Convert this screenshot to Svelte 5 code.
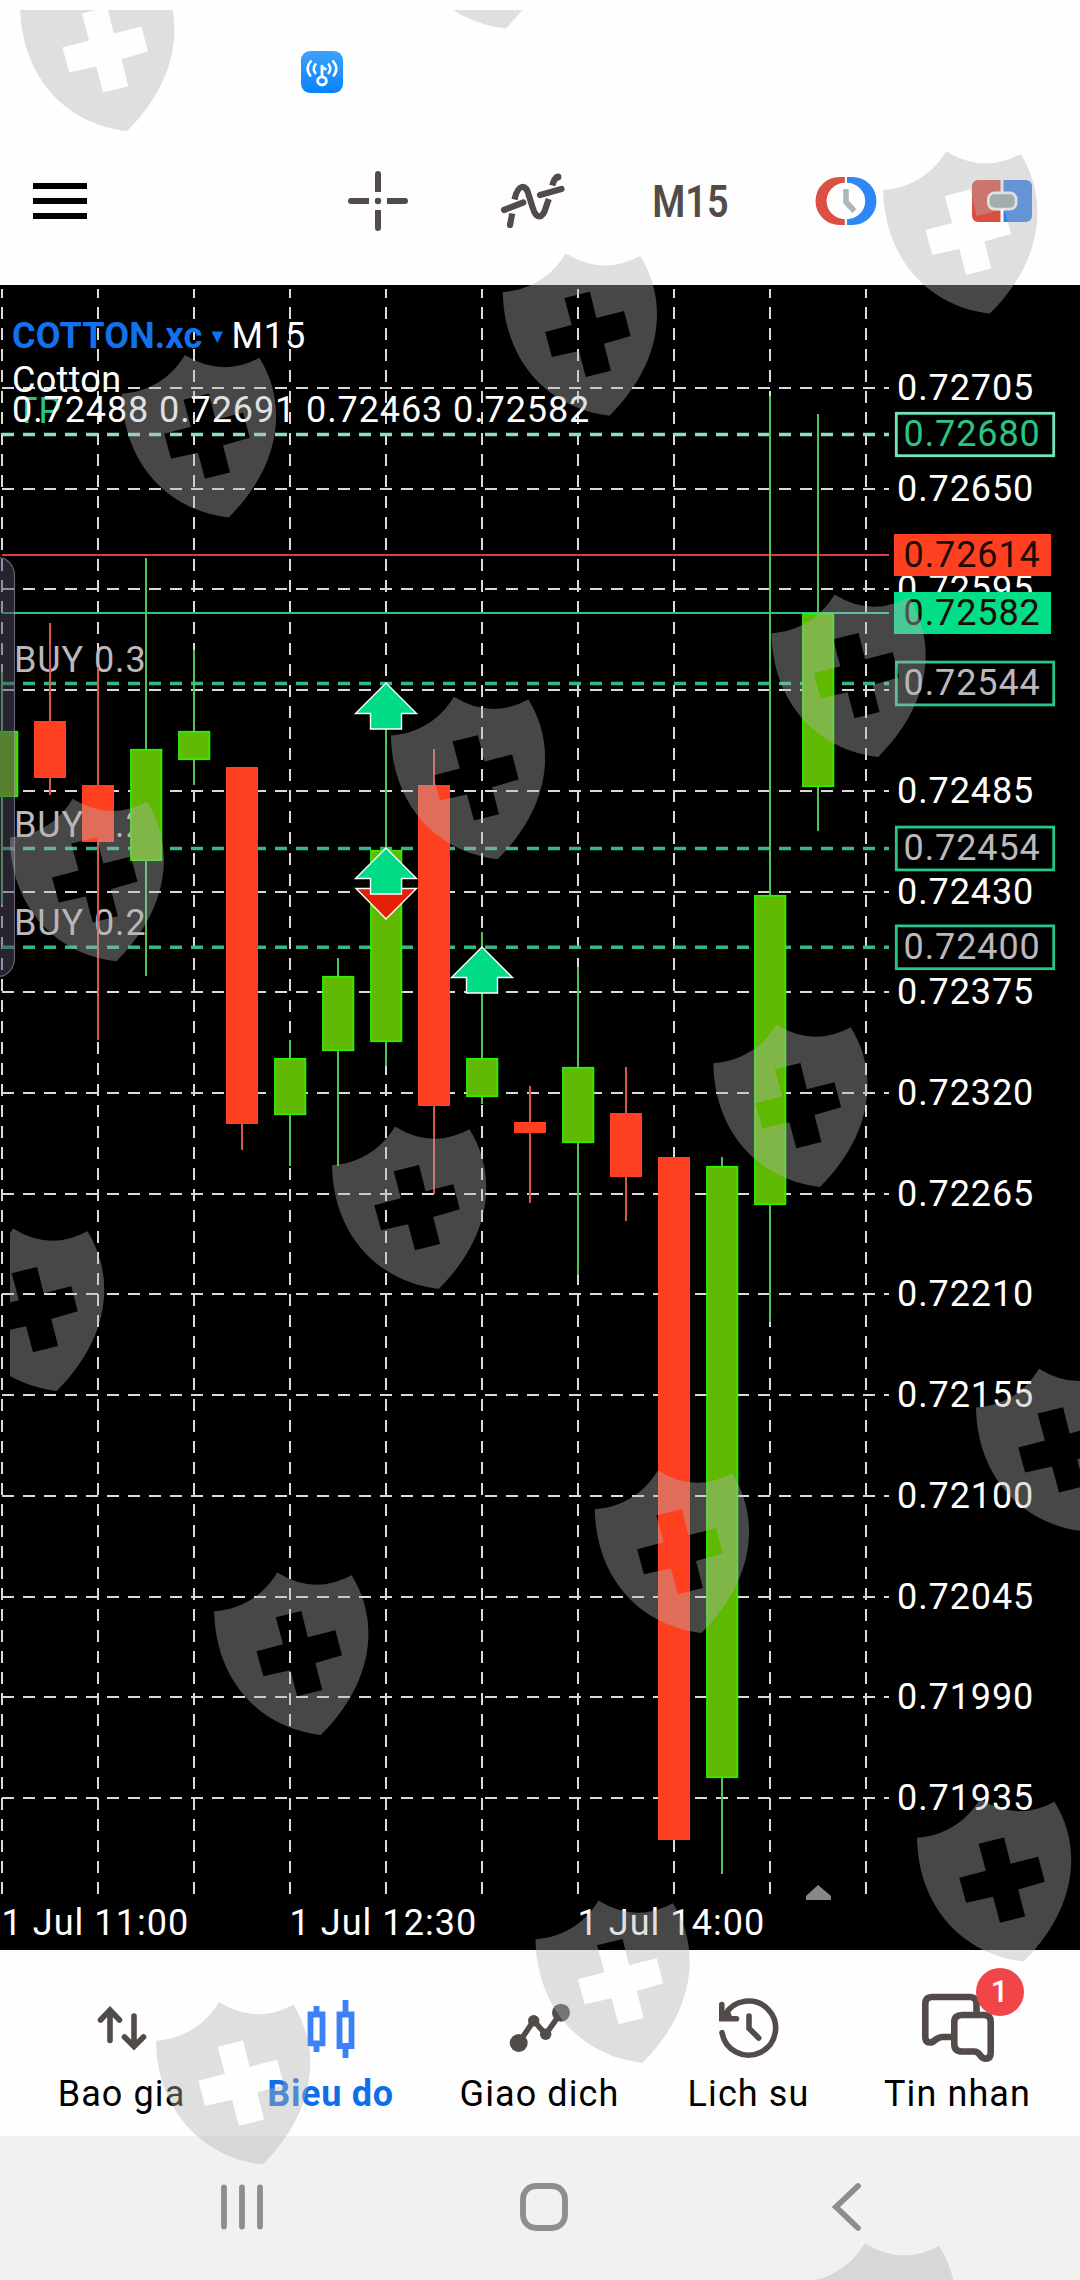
<script lang="ts">
  type Candle = { up: boolean; high: number; top: number; bottom: number; low: number };

  const TOP = 285;
  const STEP = 48;

  // pixel y of a price, given in points (0.72705 -> 72705)
  const priceY = (points: number) => 388.05 + (72705 - points) * 1.8312;
  const format = (points: number) => "0." + points;
  const candleX = (i: number) => 2 + i * STEP;

  const gridPrices = Array.from({ length: 15 }, (_, i) => 72705 - i * 55);
  const gridColumns = Array.from({ length: 10 }, (_, i) => 2 + i * 96);

  const candles: Candle[] = [
    { up: true, high: 672, top: 731, bottom: 797, low: 905 },
    { up: false, high: 623, top: 721, bottom: 778, low: 795 },
    { up: false, high: 667, top: 785, bottom: 842, low: 1040 },
    { up: true, high: 558, top: 749, bottom: 861, low: 976 },
    { up: true, high: 650, top: 731, bottom: 760, low: 785 },
    { up: false, high: 767, top: 767, bottom: 1124, low: 1150 },
    { up: true, high: 1040, top: 1058, bottom: 1115, low: 1166 },
    { up: true, high: 958, top: 976, bottom: 1051, low: 1166 },
    { up: true, high: 686, top: 850, bottom: 1042, low: 1066 },
    { up: false, high: 749, top: 785, bottom: 1106, low: 1194 },
    { up: true, high: 932, top: 1058, bottom: 1097, low: 1104 },
    { up: false, high: 1086, top: 1122, bottom: 1133, low: 1203 },
    { up: true, high: 967, top: 1067, bottom: 1143, low: 1275 },
    { up: false, high: 1067, top: 1113, bottom: 1177, low: 1221 },
    { up: false, high: 1157, top: 1157, bottom: 1840, low: 1840 },
    { up: true, high: 1157, top: 1166, bottom: 1778, low: 1874 },
    { up: true, high: 396, top: 895, bottom: 1205, low: 1322 },
    { up: true, high: 414, top: 613, bottom: 787, low: 831 },
  ];

  const orders = [
    { label: "BUY 0.3", price: 72544, y: 683.5 },
    { label: "BUY 0.2", price: 72454, y: 848.5 },
    { label: "BUY 0.2", price: 72400, y: 947.3 },
  ];

  const times = [
    { x: 1.5, label: "1 Jul 11:00" },
    { x: 289.5, label: "1 Jul 12:30" },
    { x: 577.5, label: "1 Jul 14:00" },
  ];

  const buys = [
    { x: 386, y: 683 },
    { x: 386, y: 848 },
    { x: 482, y: 947 },
  ];

  const shields = [
    [83.2, -31.2], [462, -134], [946.2, 151.2], [565.8, 253.3], [184.9, 355],
    [834.5, 594.5], [453.9, 696.8], [72.7, 798.8], [776.3, 1024.5], [395, 1126.5],
    [13, 1228.5], [1039, 1368.8], [657.8, 1470.5], [277.2, 1572.5], [980, 1799],
    [598.5, 1900.5], [219, 2002], [864.8, 2243.3],
  ];

  const tabs = [
    { id: "quotes", label: "Bao gia" },
    { id: "chart", label: "Bieu do" },
    { id: "trade", label: "Giao dich" },
    { id: "history", label: "Lich su" },
    { id: "messages", label: "Tin nhan", badge: 1 },
  ];

  let activeTab = $state("chart");
</script>

<div class="screen">
  <div class="status-bar">
    <svg width="42" height="42" viewBox="0 0 42 42">
      <defs>
        <linearGradient id="wifi-key" x1="0" y1="0" x2="0" y2="1">
          <stop offset="0" stop-color="#3ea2f8" />
          <stop offset="1" stop-color="#0683ff" />
        </linearGradient>
      </defs>
      <rect width="42" height="42" rx="9" fill="url(#wifi-key)" />
      <g fill="none" stroke="#fff" stroke-width="2.4">
        <path d="M10.500 9.500Q3 17.500 10 25.500M15 12.500Q10.500 17.500 15 23M31.500 9.500Q39 17.500 32 25.500M27 12.500Q31.500 17.500 27 23" />
        <ellipse cx="21" cy="29.800" rx="4.400" ry="4" stroke-width="2.800" />
        <path d="M21 25.500V14" stroke-width="2.800" />
        <path d="M21 16.500L25.500 18.500" stroke-width="2.800" />
      </g>
    </svg>
  </div>

  <header class="toolbar">
    <button class="menu" aria-label="Menu">
      <span></span>
      <span></span>
      <span></span>
    </button>
    <div class="tools">
      <button aria-label="Crosshair">
        <svg width="80" height="80" viewBox="-40 -40 80 80">
          <g fill="#524b49">
            <circle r="3.200" />
            <path d="M-9 -3H-27a3 3 0 0 0 0 6H-9zM9 -3H27a3 3 0 0 1 0 6H9zM-3 -9V-27a3 3 0 0 1 6 0V-9zM-3 9V27a3 3 0 0 0 6 0V9z" />
          </g>
        </svg>
      </button>
      <button aria-label="Indicators">
        <svg width="80" height="80" viewBox="-40 -40 80 80">
          <g fill="none" stroke="#524b49" stroke-width="6.200">
            <path d="M-24 24L-21.800 12.500M-19.500 -1.500C-16 -17 -8 -18 -5 -5L-1.500 6C2 19 9 18 12 6L14.800 -2M18.300 -15.500C19.500 -20 21 -23 23.500 -24" />
            <path d="M-30 9L-10.700 1.500M6 -6L27.500 -12" stroke-linecap="round" />
          </g>
          <circle cx="-24" cy="24" r="3.100" fill="#524b49" />
          <circle cx="24" cy="-24" r="3.400" fill="#524b49" />
        </svg>
      </button>
      <button class="period"><span>M15</span></button>
      <button aria-label="Trading session">
        <svg width="80" height="80" viewBox="-40 -40 80 80">
          <path d="M-1.200 -24H-6.500A24 24 0 0 0 -6.500 24H-1.200V18.200A18.200 18.200 0 0 1 -1.200 -18.200Z" fill="#db5043" />
          <path d="M1 -24H6.500A24 24 0 0 1 6.500 24H1V18.200A18.200 18.200 0 0 0 1 -18.200Z" fill="#2f86f6" />
          <path d="M0 -12V1L8.500 10" fill="none" stroke="#abb7bd" stroke-width="5.500" stroke-linejoin="round" />
        </svg>
      </button>
      <button aria-label="One click trading">
        <svg width="80" height="80" viewBox="-40 -40 80 80">
          <path d="M-1.500 -21H-24a6 6 0 0 0 -6 6V15a6 6 0 0 0 6 6H-1.500z" fill="#db4f41" />
          <path d="M1.500 -21H24a6 6 0 0 1 6 6V15a6 6 0 0 1 -6 6H1.500z" fill="#3380ee" />
          <rect x="-15" y="-9.500" width="30.500" height="19" rx="7.500" fill="#fff" />
          <rect x="-12.300" y="-6.700" width="25" height="13.400" rx="5" fill="#99a8ae" />
        </svg>
      </button>
    </div>
  </header>

  <main class="chart">
    <svg width="1080" height="1665" viewBox="0 {TOP} 1080 1665">
      <g class="grid">
        {#each gridColumns as x}
          <line x1={x} x2={x} y1="1894" y2="289" />
        {/each}
        {#each gridPrices as price}
          <line x1="2" x2="889" y1={Math.round(priceY(price))} y2={Math.round(priceY(price))} />
        {/each}
      </g>

      <line class="ask" x1="2" x2="889" y1="555" y2="555" />
      <line class="bid" x1="2" x2="889" y1="613" y2="613" />
      <line class="level tp" x1="2" x2="889" y1="434.500" y2="434.500" />
      {#each orders as order}
        <line class="level" x1="2" x2="889" y1={order.y} y2={order.y} />
        <text class="order-label" x="14" y={order.y - 12}>{order.label}</text>
      {/each}

      {#each candles as c, i}
        <g class={c.up ? "up" : "down"}>
          <line x1={candleX(i)} x2={candleX(i)} y1={c.high} y2={c.low} />
          {#if c.up}
            <rect x={candleX(i) - 15} y={c.top + 0.8} width="30.4" height={c.bottom - c.top - 1.6} />
          {:else}
            <rect x={candleX(i) - 16} y={c.top} width="32" height={c.bottom - c.top} />
          {/if}
        </g>
      {/each}

      <path class="sell" d="M386 919L356 888.500H371V873H401V888.500H416.500Z" />
      {#each buys as b}
        <path class="buy" d="M{b.x} {b.y}l30.500 30.500h-15v15.500h-31v-15.500h-15z" />
      {/each}

      <text class="symbol" x="12" y="348">COTTON.xc</text>
      <path d="M211.500 331.500H223L217.300 343Z" fill="#0f72f0" />
      <text x="231.500" y="348" letter-spacing="0">M15</text>
      <text class="desc" x="12" y="392">Cotton</text>
      <text class="tp-label" x="16" y="422.500">TP</text>
      <text x="12" y="422">0.72488 0.72691 0.72463 0.72582</text>

      {#each gridPrices.filter((p) => p !== 72540) as price}
        <text x="897" y={priceY(price) + 12}>{format(price)}</text>
      {/each}

      <rect class="box tp-box" x="896.300" y="413.300" width="157.400" height="42.400" />
      <text class="tp-price" x="903.500" y="446">0.72680</text>
      <rect x="894" y="534" width="157" height="42" fill="#ff4020" />
      <text class="quote" x="903.500" y="567">0.72614</text>
      <rect x="894" y="592" width="157" height="42" fill="#00de87" />
      <text class="quote" x="903.500" y="625">0.72582</text>
      {#each orders as order}
        <rect class="box" x="896.300" y={order.y - 21.4} width="157.400" height="42.800" />
        <text class="order-price" x="903.500" y={order.y + 11.3}>{format(order.price)}</text>
      {/each}

      {#each times as t}
        <text class="time" x={t.x} y="1935">{t.label}</text>
      {/each}
      <path d="M818 1885L831 1896V1900H806V1896Z" fill="#888" />

      <!-- edge panel handle -->
      <path class="handle" d="M-2 557.500A16.500 18 0 0 1 14.500 576V958A16.500 18 0 0 1 -2 976.500Z" />
    </svg>
  </main>

  <nav class="tabs">
    {#each tabs as tab}
      <button class="tab" class:active={activeTab === tab.id} onclick={() => (activeTab = tab.id)}>
        <svg width="94" height="94" viewBox="-47 -47 94 94">
          {#if tab.id === "quotes"}
            <path class="line" d="M-12 14.500V-16M-21.500 -6L-12 -16L-2.500 -6M12 -10V20M2.500 11L12 20.500L21.500 11" />
          {:else if tab.id === "chart"}
            <g fill="none" stroke="#3b82f8" stroke-width="5.800">
              <path d="M-20.500 -11.500H-8.500V17.300H-20.500ZM-14.500 -20V-11M-14.500 17V26" />
              <path d="M8.500 -11.500H20.500V20H8.500ZM14.500 -26V-11M14.500 20V32" />
            </g>
          {:else if tab.id === "trade"}
            <path class="line" d="M-21.300 17L-6.300 -5.300L5.700 8.300L21 -13.300" />
            <g fill="#524b49">
              <circle cx="-21.300" cy="17" r="9" />
              <circle cx="-6.300" cy="-5.300" r="5.700" />
              <circle cx="5.700" cy="8.300" r="5.700" />
              <circle cx="21" cy="-13.300" r="9" />
            </g>
          {:else if tab.id === "history"}
            <path class="line" d="M-27 6.700A27 27 0 1 0 -24 -11M0 -10V2.300L9.700 12" />
            <path d="M-30 -21.500a2.800 2.800 0 0 1 5.600 0V-14L-20 -16.500L-17 -10H-12.500a2.800 2.800 0 0 1 0 5.600H-30Z" fill="#524b49" />
          {:else}
            <g class="line bubble">
              <path d="M18.500 -11V-22Q18.500 -29 12 -29H-26Q-32.700 -29 -32.700 -22V12Q-32 17 -27 16.500C-22 15 -22 11 -15 11H-7" />
              <path d="M4 -11H26Q32.700 -11 32.700 -4V27Q32.700 32.700 27.300 32.700C21 32 23 25.500 16 25.500H4Q-3.700 25.500 -3.700 18V-4Q-3.700 -11 4 -11Z" />
            </g>
          {/if}
        </svg>
        <span class="tab-label">{tab.label}</span>
        {#if tab.badge}
          <span class="badge">{tab.badge}</span>
        {/if}
      </button>
    {/each}
  </nav>

  <footer class="system-nav">
    <svg width="50" height="60" viewBox="-25 -30 50 60">
      <path d="M-18 -19.500V19.500M0 -19.500V19.500M18 -19.500V19.500" />
    </svg>
    <svg width="60" height="60" viewBox="-30 -30 60 60">
      <rect x="-21" y="-21" width="42" height="42" rx="13" />
    </svg>
    <svg width="50" height="60" viewBox="-25 -30 50 60">
      <path d="M12 -21L-10 0L12 21" />
    </svg>
  </footer>

  <svg class="shields" width="1080" height="2280" viewBox="0 0 1080 2280">
    <defs>
      <clipPath id="area"><rect x="10" y="10" width="1070" height="2270" /></clipPath>
      <path
        id="shield"
        fill-rule="evenodd"
        d="M0 0Q37 23 74.400 2.700C104 50 95 112 43.700 162.400C-20 155 -62 105 -63 38.700C-38 37 -15 25 0 0ZM-1.400 44.700L5.900 71.700L-20.700 78.700L-13.900 103.700L13.100 97.700L20 123.700L45.100 117.400L38.200 90.400L64.800 82.700L58.200 57.700L30.600 64.700L24.100 38.400Z"
      />
    </defs>
    <g clip-path="url(#area)">
      {#each shields as [x, y]}
        <use href="#shield" {x} {y} />
      {/each}
    </g>
  </svg>
</div>

<style>
  :global(body) {
    margin: 0;
    background: #fff;
  }

  .screen {
    position: relative;
    display: flex;
    flex-direction: column;
    width: 1080px;
    height: 2280px;
    overflow: hidden;
    background: #fefefe;
    font-family: Roboto, "Liberation Sans", sans-serif;
  }

  button {
    padding: 0;
    border: 0;
    background: none;
    font: inherit;
    cursor: pointer;
  }

  svg {
    display: block;
  }

  .status-bar {
    box-sizing: border-box;
    height: 117px;
    padding: 51px 301px 0;
  }

  .toolbar {
    display: flex;
    align-items: center;
    justify-content: space-between;
    height: 168px;
    padding-left: 33px;
  }
  .menu {
    display: flex;
    flex-direction: column;
    gap: 9px;
    width: 54px;
  }
  .menu span {
    height: 6px;
    background: #000;
  }
  .tools {
    display: grid;
    grid-template-columns: repeat(5, 156px);
  }
  .tools button {
    display: flex;
    align-items: center;
    justify-content: center;
  }
  .tools .period {
    font-size: 45px;
    font-weight: 600;
    color: #524b49;
  }
  .period span {
    transform: scaleX(0.84);
  }

  .chart {
    height: 1665px;
    background: #000;
  }
  .chart text {
    fill: #fff;
    font-size: 36px;
    letter-spacing: 0.9px;
  }
  .chart .symbol {
    fill: #1272ee;
    font-weight: 700;
    letter-spacing: 0.15px;
  }
  .chart .desc {
    letter-spacing: 0.3px;
  }
  .chart .time {
    letter-spacing: 1.05px;
  }
  .chart .tp-label,
  .chart .tp-price {
    fill: #2bc583;
  }
  .chart .order-label,
  .chart .order-price {
    fill: #bcb8bc;
  }
  .chart .quote {
    fill: #1c0c06;
  }
  .grid line {
    stroke: #dadada;
    stroke-width: 2;
    stroke-dasharray: 12 9;
  }
  .ask {
    stroke: #d8403c;
    stroke-width: 2;
  }
  .bid {
    stroke: #2cc486;
    stroke-width: 2;
  }
  .level {
    stroke: #35b888;
    stroke-width: 3.4;
    stroke-dasharray: 12 9;
  }
  .level.tp {
    stroke: #8ae2bc;
  }
  .box {
    fill: #000;
    stroke: #27c787;
    stroke-width: 2.8;
  }
  .box.tp-box {
    stroke: #72e8b8;
  }
  .up line {
    stroke: #4fc358;
    stroke-width: 2;
  }
  .up rect {
    fill: #5eb900;
    stroke: #2cf000;
    stroke-width: 1.8;
  }
  .down line {
    stroke: #d9544a;
    stroke-width: 2;
  }
  .down rect {
    fill: #ff4020;
  }
  .buy {
    fill: #00dc85;
    stroke: #fff;
    stroke-width: 1.4;
  }
  .sell {
    fill: #e52009;
    stroke: #fff;
    stroke-width: 1.4;
  }
  .handle {
    fill: rgba(78, 70, 96, 0.5);
    stroke: rgba(160, 160, 170, 0.6);
    stroke-width: 1.2;
  }

  .tabs {
    display: grid;
    grid-template-columns: repeat(5, 209px);
    justify-content: center;
    height: 186px;
  }
  .tab {
    position: relative;
    display: flex;
    flex-direction: column;
    align-items: center;
    padding-top: 29px;
    color: #000;
  }
  .tab-label {
    font-size: 36px;
    line-height: 42px;
    letter-spacing: 1.1px;
    margin-left: -1px;
  }
  .tab.active {
    color: #0f6fe8;
    font-weight: 700;
  }
  .tab.active .tab-label {
    letter-spacing: 0.7px;
  }
  .line {
    fill: none;
    stroke: #524b49;
    stroke-width: 5.6;
    stroke-linecap: round;
  }
  .bubble {
    stroke-width: 6.6;
  }
  .badge {
    position: absolute;
    top: 18px;
    left: 122px;
    width: 48px;
    border-radius: 50%;
    background: #f14647;
    color: #fff;
    font-size: 31px;
    font-weight: 500;
    line-height: 48px;
    text-align: center;
  }

  .system-nav {
    display: grid;
    grid-template-columns: repeat(3, 302px);
    align-items: center;
    justify-items: center;
    height: 142px;
    padding: 0 83px 2px 91px;
    background: #f1f1f1;
  }
  .system-nav svg {
    fill: none;
    stroke: #8e8e8e;
    stroke-width: 5.8;
    stroke-linecap: round;
  }

  .shields {
    position: absolute;
    inset: 0;
    fill: #b2b2b2;
    fill-opacity: 0.4;
    pointer-events: none;
  }
</style>
